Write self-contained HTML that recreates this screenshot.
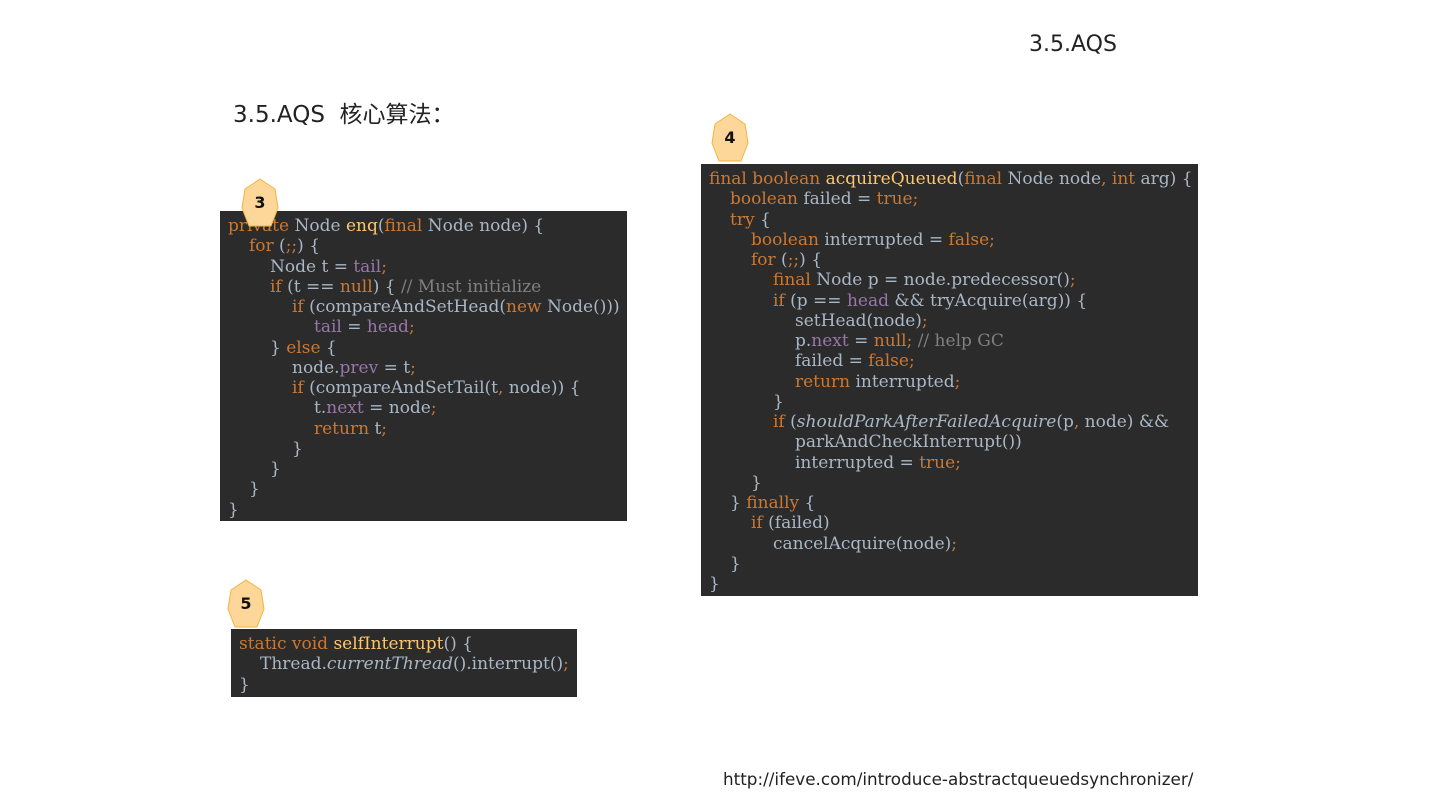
<!DOCTYPE html>
<html><head><meta charset="utf-8"><style>
body{margin:0;width:1440px;height:810px;background:#fff;position:relative;overflow:hidden;font-family:"DejaVu Sans","Liberation Sans","Noto Sans CJK SC",sans-serif}
.box{position:absolute;background:#2b2b2b;color:#a9b7c6;font-family:"DejaVu Serif","Liberation Serif",serif;font-size:17px;line-height:20.25px;padding:5px 0 0 8px;box-sizing:border-box;white-space:pre}
.k{color:#cc7832}.p{color:#9876aa}.c{color:#808080}.m{color:#ffc66d}.i{font-style:italic}
.l1{padding-left:21px}.l2{padding-left:42px}.l3{padding-left:64px}.l4{padding-left:86px}
.badge{position:absolute;width:38px;height:50px}
.badge span{position:absolute;left:0;right:0;top:15px;text-align:center;font:bold 16px "DejaVu Sans",sans-serif;color:#111}
.t{position:absolute;color:#222}
</style></head><body>
<div class="t" style="left:1029px;top:32px;font-size:22px">3.5.AQS</div>
<div class="t" style="left:233px;top:95px;font-size:23px">3.5.AQS&nbsp; 核心算法：</div>
<div class="t" style="left:723px;top:769px;font-size:16.8px">http://ifeve.com/introduce-abstractqueuedsynchronizer/</div>

<div class="box" style="left:220px;top:211px;width:407px;height:310px"><div><span class="k">private</span> Node <span class="m">enq</span>(<span class="k">final</span> Node node) {</div><div class="l1"><span class="k">for</span> (<span class="k">;;</span>) {</div><div class="l2">Node t = <span class="p">tail</span><span class="k">;</span></div><div class="l2"><span class="k">if</span> (t == <span class="k">null</span>) { <span class="c">// Must initialize</span></div><div class="l3"><span class="k">if</span> (compareAndSetHead(<span class="k">new</span> Node()))</div><div class="l4"><span class="p">tail</span> = <span class="p">head</span><span class="k">;</span></div><div class="l2">} <span class="k">else</span> {</div><div class="l3">node.<span class="p">prev</span> = t<span class="k">;</span></div><div class="l3"><span class="k">if</span> (compareAndSetTail(t<span class="k">,</span> node)) {</div><div class="l4">t.<span class="p">next</span> = node<span class="k">;</span></div><div class="l4"><span class="k">return</span> t<span class="k">;</span></div><div class="l3">}</div><div class="l2">}</div><div class="l1">}</div><div>}</div></div>

<div class="box" style="left:701px;top:164px;width:497px;height:432px"><div><span class="k">final boolean</span> <span class="m">acquireQueued</span>(<span class="k">final</span> Node node<span class="k">,</span> <span class="k">int</span> arg) {</div><div class="l1"><span class="k">boolean</span> failed = <span class="k">true;</span></div><div class="l1"><span class="k">try</span> {</div><div class="l2"><span class="k">boolean</span> interrupted = <span class="k">false;</span></div><div class="l2"><span class="k">for</span> (<span class="k">;;</span>) {</div><div class="l3"><span class="k">final</span> Node p = node.predecessor()<span class="k">;</span></div><div class="l3"><span class="k">if</span> (p == <span class="p">head</span> &amp;&amp; tryAcquire(arg)) {</div><div class="l4">setHead(node)<span class="k">;</span></div><div class="l4">p.<span class="p">next</span> = <span class="k">null;</span> <span class="c">// help GC</span></div><div class="l4">failed = <span class="k">false;</span></div><div class="l4"><span class="k">return</span> interrupted<span class="k">;</span></div><div class="l3">}</div><div class="l3"><span class="k">if</span> (<span class="i">shouldParkAfterFailedAcquire</span>(p<span class="k">,</span> node) &amp;&amp;</div><div class="l4">parkAndCheckInterrupt())</div><div class="l4">interrupted = <span class="k">true;</span></div><div class="l2">}</div><div class="l1">} <span class="k">finally</span> {</div><div class="l2"><span class="k">if</span> (failed)</div><div class="l3">cancelAcquire(node)<span class="k">;</span></div><div class="l1">}</div><div>}</div></div>

<div class="box" style="left:231px;top:629px;width:346px;height:68px"><div><span class="k">static void</span> <span class="m">selfInterrupt</span>() {</div><div class="l1">Thread.<span class="i">currentThread</span>().interrupt()<span class="k">;</span></div><div>}</div></div>

<div class="badge" style="left:241px;top:178px"><svg width="38" height="50"><polygon points="19,1 34,11 37,30 30,48 8,48 1,30 4,11" fill="#fdd79a" stroke="#f0b63c" stroke-width="1"/></svg><span>3</span></div>
<div class="badge" style="left:711px;top:113px"><svg width="38" height="50"><polygon points="19,1 34,11 37,30 30,48 8,48 1,30 4,11" fill="#fdd79a" stroke="#f0b63c" stroke-width="1"/></svg><span>4</span></div>
<div class="badge" style="left:227px;top:579px"><svg width="38" height="50"><polygon points="19,1 34,11 37,30 30,48 8,48 1,30 4,11" fill="#fdd79a" stroke="#f0b63c" stroke-width="1"/></svg><span>5</span></div>
</body></html>
